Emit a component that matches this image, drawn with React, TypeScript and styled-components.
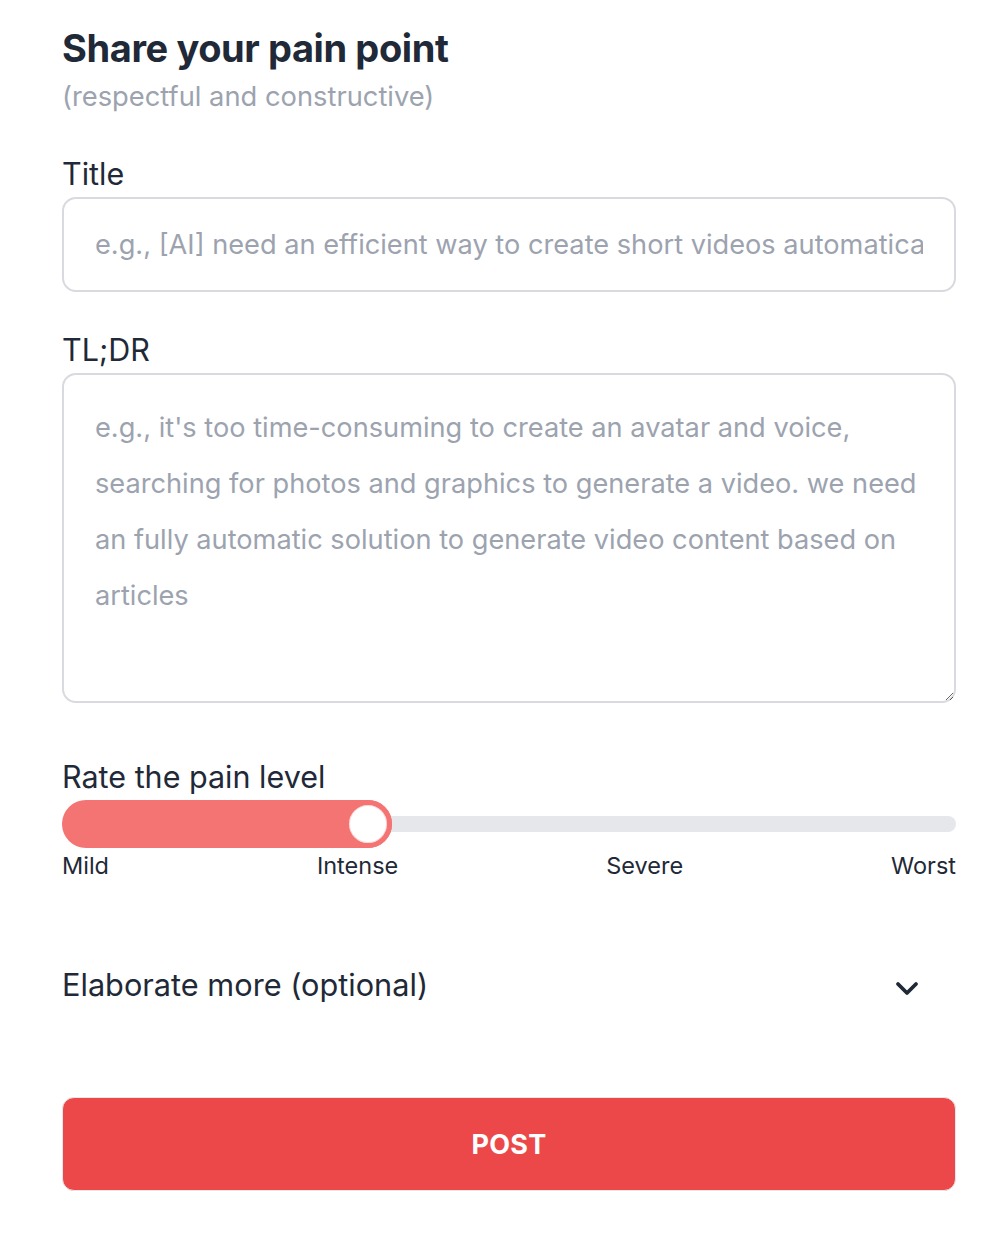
import React, { useState } from "react"
import styled, { createGlobalStyle } from "styled-components"

const GlobalStyle = createGlobalStyle`
  html, body {
    margin: 0;
    padding: 0;
    background: #ffffff;
  }
  body {
    font-family: Inter, "Noto Sans", "Liberation Sans", sans-serif;
    color: #1f2937;
  }
  * {
    box-sizing: border-box;
  }
`

const levels = ["Mild", "Intense", "Severe", "Worst"]

const Page = styled.main`
  width: 1006px;
  padding: 24px 50px 60px 62px;
`

const Form = styled.form`
  display: flex;
  flex-direction: column;
  width: 894px;
`

const Heading = styled.h1`
  margin: 0;
  font-size: 38px;
  line-height: 48px;
  font-weight: 700;
  letter-spacing: -0.4px;
  color: #1f2937;
`

const Subtitle = styled.p`
  margin: 5px 0 0;
  font-size: 27.3px;
  line-height: 40px;
  color: #9ca3af;
`

const Field = styled.div<{ $top: number }>`
  display: flex;
  flex-direction: column;
  margin-top: ${(p) => p.$top}px;
`

const Label = styled.label`
  font-size: 30.5px;
  line-height: 40px;
  color: #1f2937;
  margin-bottom: 3px;
`

const TextInput = styled.input`
  width: 100%;
  height: 95px;
  padding: 0 31px;
  border: 2px solid #d8dadf;
  border-radius: 14px;
  font-family: inherit;
  font-size: 27.2px;
  color: #1f2937;
  outline: none;
  &::placeholder {
    color: #9ca3af;
  }
`

const TextArea = styled.textarea`
  width: 100%;
  height: 330px;
  padding: 25px 31px;
  border: 2px solid #d8dadf;
  border-radius: 14px;
  font-family: inherit;
  font-size: 27.2px;
  line-height: 56px;
  color: #1f2937;
  outline: none;
  resize: vertical;
  &::placeholder {
    color: #9ca3af;
  }
`

const SliderWrap = styled.div`
  position: relative;
  height: 48px;
  display: flex;
  align-items: center;
`

const Track = styled.div`
  width: 100%;
  height: 16px;
  border-radius: 8px;
  background: #e5e7eb;
`

const Fill = styled.div`
  position: absolute;
  left: 0;
  top: 0;
  height: 48px;
  border-radius: 24px;
  background: #f47373;
`

const Thumb = styled.div`
  position: absolute;
  top: 0;
  width: 48px;
  height: 48px;
  border-radius: 50%;
  background: #ffffff;
  border: 5px solid #f47373;
  box-shadow: inset 0 0 0 1px #fbdada;
`

const Ticks = styled.div`
  display: flex;
  justify-content: space-between;
  margin-top: 3px;
  font-size: 23.5px;
  line-height: 30px;
  color: #1f2937;
`

const Accordion = styled.button`
  display: flex;
  align-items: center;
  justify-content: space-between;
  width: 100%;
  margin-top: 82px;
  padding: 0 37px 0 0;
  border: none;
  background: none;
  font-family: inherit;
  font-size: 30.7px;
  line-height: 44px;
  color: #1f2937;
  cursor: pointer;
  text-align: left;
  svg {
    margin-top: 5px;
  }
`

const PostButton = styled.button`
  width: 100%;
  height: 94px;
  margin-top: 90px;
  border: 1px solid #e5e7eb;
  border-radius: 12px;
  background: #ec4849;
  color: #ffffff;
  font-family: inherit;
  font-size: 27px;
  font-weight: 700;
  letter-spacing: 0.3px;
  cursor: pointer;
`

function Chevron() {
  return (
    <svg width="24" height="16" viewBox="0 0 24 16" fill="none">
      <path d="M3 4l9 9 9-9" stroke="#1f2937" strokeWidth="3.8" strokeLinecap="round" strokeLinejoin="round" />
    </svg>
  )
}

export default function App() {
  const [level] = useState(1)
  // fill ends at the thumb's right edge; thumb centre sits on a third of the span
  const thumbLeft = 282 + (level - 1) * 282
  return (
    <>
      <GlobalStyle />
      <Page>
        <Form onSubmit={(e) => e.preventDefault()}>
          <Heading>Share your pain point</Heading>
          <Subtitle>(respectful and constructive)</Subtitle>

          <Field $top={37}>
            <Label htmlFor="title">Title</Label>
            <TextInput id="title" placeholder="e.g., [AI] need an efficient way to create short videos automatically" />
          </Field>

          <Field $top={38}>
            <Label htmlFor="tldr">TL;DR</Label>
            <TextArea
              id="tldr"
              placeholder={
                "e.g., it's too time-consuming to create an avatar and voice,\nsearching for photos and graphics to generate a video. we need\nan fully automatic solution to generate video content based on\narticles"
              }
            />
          </Field>

          <Field $top={54}>
            <Label>Rate the pain level</Label>
            <SliderWrap>
              <Track />
              <Fill style={{ width: thumbLeft + 48 }} />
              <Thumb style={{ left: thumbLeft }} />
            </SliderWrap>
            <Ticks>
              {levels.map((l) => (
                <span key={l}>{l}</span>
              ))}
            </Ticks>
          </Field>

          <Accordion type="button">
            <span>Elaborate more (optional)</span>
            <Chevron />
          </Accordion>

          <PostButton type="submit">POST</PostButton>
        </Form>
      </Page>
    </>
  )
}
